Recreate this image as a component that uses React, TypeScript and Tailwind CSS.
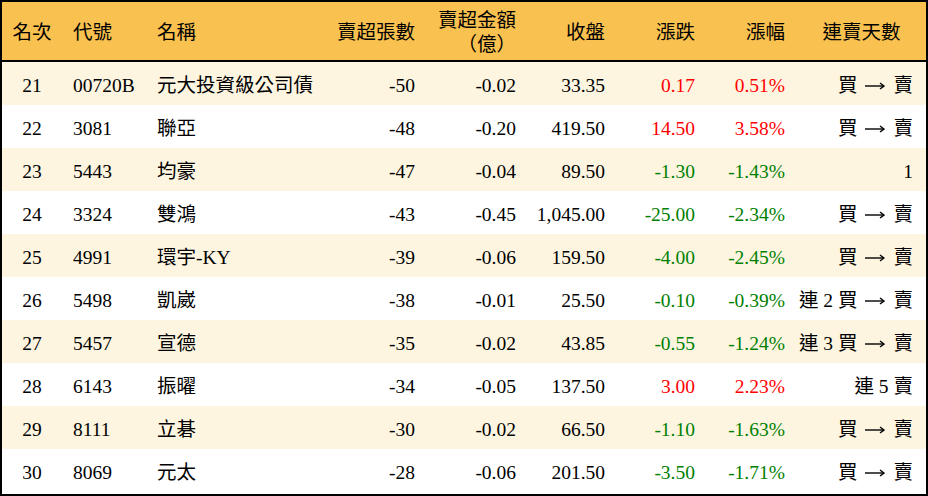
const rows = [
  { rank: "21", code: "00720B", name: "元大投資級公司債", lots: "-50", amount: "-0.02", close: "33.35", chg: "0.17", pct: "0.51%", streak: ["", "買", "賣"] },
  { rank: "22", code: "3081", name: "聯亞", lots: "-48", amount: "-0.20", close: "419.50", chg: "14.50", pct: "3.58%", streak: ["", "買", "賣"] },
  { rank: "23", code: "5443", name: "均豪", lots: "-47", amount: "-0.04", close: "89.50", chg: "-1.30", pct: "-1.43%", streak: "1" },
  { rank: "24", code: "3324", name: "雙鴻", lots: "-43", amount: "-0.45", close: "1,045.00", chg: "-25.00", pct: "-2.34%", streak: ["", "買", "賣"] },
  { rank: "25", code: "4991", name: "環宇-KY", lots: "-39", amount: "-0.06", close: "159.50", chg: "-4.00", pct: "-2.45%", streak: ["", "買", "賣"] },
  { rank: "26", code: "5498", name: "凱崴", lots: "-38", amount: "-0.01", close: "25.50", chg: "-0.10", pct: "-0.39%", streak: ["連 2 ", "買", "賣"] },
  { rank: "27", code: "5457", name: "宣德", lots: "-35", amount: "-0.02", close: "43.85", chg: "-0.55", pct: "-1.24%", streak: ["連 3 ", "買", "賣"] },
  { rank: "28", code: "6143", name: "振曜", lots: "-34", amount: "-0.05", close: "137.50", chg: "3.00", pct: "2.23%", streak: "連 5 賣" },
  { rank: "29", code: "8111", name: "立碁", lots: "-30", amount: "-0.02", close: "66.50", chg: "-1.10", pct: "-1.63%", streak: ["", "買", "賣"] },
  { rank: "30", code: "8069", name: "元太", lots: "-28", amount: "-0.06", close: "201.50", chg: "-3.50", pct: "-1.71%", streak: ["", "買", "賣"] },
];

const cols = "grid grid-cols-[60px_85px_183px_97px_101px_89px_90px_90px_1fr]";

function Streak({ value }: { value: string | string[] }) {
  if (typeof value === "string") return <>{value}</>;
  const [prefix, from, to] = value;
  return (
    <>
      {prefix}
      {from}
      <span className="relative -top-[2px] inline-flex w-[36px] justify-center align-middle">
        <svg width="20" height="10" viewBox="0 0 20 10" fill="none" stroke="#000" strokeWidth="1.4">
          <path d="M0 5h19" />
          <path d="M15 2l4 3-4 3" />
        </svg>
      </span>
      {to}
    </>
  );
}

export default function App() {
  return (
    <div
      className="w-[928px] h-[496px] bg-white border-2 border-black text-[19.5px] text-black overflow-hidden"
      style={{ fontFamily: '"Liberation Serif", "Noto Sans CJK TC", serif' }}
    >
      <div className={`${cols} h-[60px] items-center bg-[#f9c14f] border-b-2 border-black pt-[4px]`}>
        <div className="text-center">名次</div>
        <div className="pl-[11px]">代號</div>
        <div className="pl-[10px]">名稱</div>
        <div className="text-right pr-[12px]">賣超張數</div>
        <div className="text-right pr-[12px] leading-[24px]">
          <div>賣超金額</div>
          <div>（億）</div>
        </div>
        <div className="text-right pr-[12px]">收盤</div>
        <div className="text-right pr-[12px]">漲跌</div>
        <div className="text-right pr-[12px]">漲幅</div>
        <div className="text-center">連賣天數</div>
      </div>
      {rows.map((r, i) => {
        const up = !r.chg.startsWith("-");
        const color = up ? "text-[#ff0000]" : "text-[#008000]";
        return (
          <div
            key={r.rank}
            className={`${cols} h-[43px] items-center pt-[5px] ${i % 2 === 0 ? "bg-[#fdf5e0]" : "bg-white"}`}
          >
            <div className="text-center">{r.rank}</div>
            <div className="pl-[11px]">{r.code}</div>
            <div className="pl-[10px] whitespace-nowrap">{r.name}</div>
            <div className="text-right pr-[12px]">{r.lots}</div>
            <div className="text-right pr-[12px]">{r.amount}</div>
            <div className="text-right pr-[12px]">{r.close}</div>
            <div className={`text-right pr-[12px] ${color}`}>{r.chg}</div>
            <div className={`text-right pr-[12px] ${color}`}>{r.pct}</div>
            <div className="text-right pr-[13px] whitespace-pre">
              <Streak value={r.streak} />
            </div>
          </div>
        );
      })}
    </div>
  );
}
